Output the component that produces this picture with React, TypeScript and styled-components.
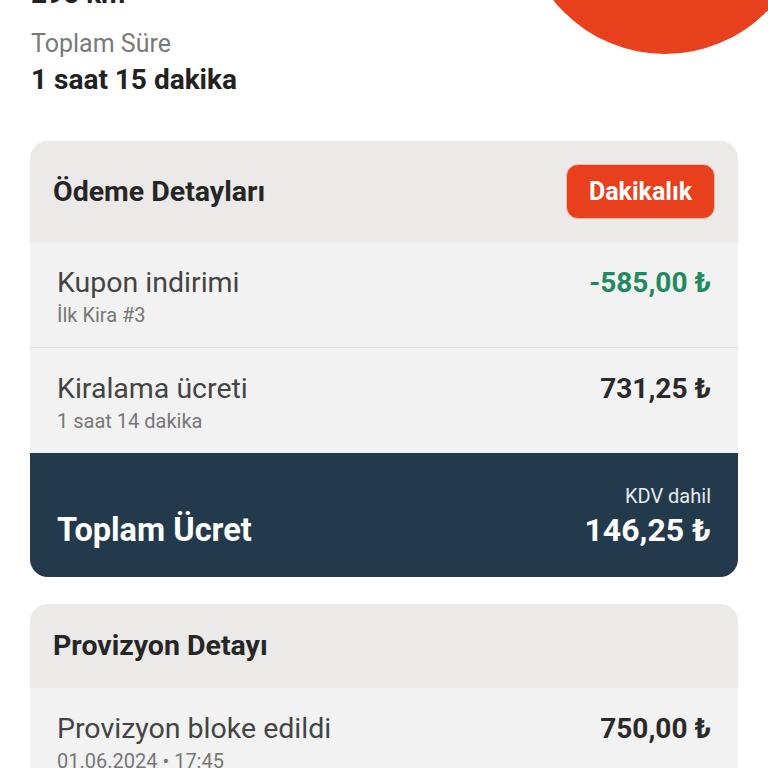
import styled, { createGlobalStyle } from "styled-components";

const GlobalStyle = createGlobalStyle`
  html, body {
    margin: 0;
    padding: 0;
    background: #ffffff;
    font-family: Roboto, "Noto Sans", "Liberation Sans", sans-serif;
    overflow: hidden;
  }
`;

const Page = styled.div`
  position: relative;
  height: 768px;
  overflow: hidden;
  background: #ffffff;
`;

const MarkerCircle = styled.div`
  position: absolute;
  left: 522px;
  top: -232px;
  width: 286px;
  height: 286px;
  border-radius: 50%;
  background: #e8401c;
`;

const Content = styled.div`
  display: flex;
  flex-direction: column;
  padding: 0 30px;
  margin-top: -56px;
`;

const Stats = styled.div`
  display: flex;
  flex-direction: column;
  gap: 20px;
  padding-left: 1px;
`;

const Stat = styled.div`
  display: flex;
  flex-direction: column;
  gap: 6px;
`;

const StatLabel = styled.span`
  font-size: 25px;
  line-height: 28px;
  color: #7a7a7a;
`;

const StatValue = styled.span`
  font-size: 28px;
  line-height: 32px;
  font-weight: 700;
  color: #222222;
`;

const Card = styled.section<{ $gap?: number }>`
  margin-top: ${({ $gap }) => $gap ?? 27}px;
  border-radius: 18px;
  overflow: hidden;
  background: #f2f2f2;
`;

const CardHeader = styled.div`
  display: flex;
  align-items: center;
  justify-content: space-between;
  padding: 23px 23px;
  background: #ebeae9;
`;

const CardTitle = styled.h2`
  margin: 0;
  font-size: 28.5px;
  line-height: 38px;
  font-weight: 700;
  color: #262626;
`;

const Badge = styled.span`
  display: inline-flex;
  align-items: center;
  justify-content: center;
  height: 55px;
  width: 149px;
  box-sizing: border-box;
  border-radius: 12px;
  background: #e8401c;
  border: 1px solid #f6b9a6;
  color: #ffffff;
  font-size: 25px;
  font-weight: 700;
`;

const Row = styled.div`
  display: flex;
  justify-content: space-between;
  align-items: flex-start;
  padding: 24px 27px 20px;
  & + & {
    border-top: 1px solid #e3e3e3;
  }
`;

const RowText = styled.div`
  display: flex;
  flex-direction: column;
  gap: 3px;
`;

const RowTitle = styled.span`
  font-size: 28.5px;
  line-height: 34px;
  color: #444444;
`;

const RowSub = styled.span`
  font-size: 20px;
  line-height: 24px;
  color: #777777;
`;

const Amount = styled.span<{ $tone?: "green" | "dark" }>`
  font-size: 28px;
  line-height: 34px;
  font-weight: 700;
  color: ${({ $tone }) => ($tone === "green" ? "#1f8a5f" : "#2a2a2a")};
`;

const Total = styled.div`
  display: flex;
  justify-content: space-between;
  align-items: flex-end;
  padding: 31px 27px 27px;
  background: #233a4c;
  color: #ffffff;
`;

const TotalTitle = styled.span`
  font-size: 32.5px;
  line-height: 40px;
  font-weight: 700;
`;

const TotalSide = styled.div`
  display: flex;
  flex-direction: column;
  align-items: flex-end;
  gap: 2px;
`;

const TotalNote = styled.span`
  font-size: 20px;
  line-height: 24px;
  color: #e6ebef;
`;

const TotalAmount = styled.span`
  font-size: 32px;
  line-height: 40px;
  font-weight: 700;
`;

type LineItem = {
  title: string;
  sub: string;
  amount: string;
  tone?: "green" | "dark";
};

const paymentItems: LineItem[] = [
  { title: "Kupon indirimi", sub: "İlk Kira #3", amount: "-585,00 ₺", tone: "green" },
  { title: "Kiralama ücreti", sub: "1 saat 14 dakika", amount: "731,25 ₺" },
];

const provisionItems: LineItem[] = [
  { title: "Provizyon bloke edildi", sub: "01.06.2024 • 17:45", amount: "750,00 ₺" },
];

const ItemRow = ({ title, sub, amount, tone }: LineItem) => (
  <Row>
    <RowText>
      <RowTitle>{title}</RowTitle>
      <RowSub>{sub}</RowSub>
    </RowText>
    <Amount $tone={tone}>{amount}</Amount>
  </Row>
);

export default function App() {
  return (
    <Page>
      <GlobalStyle />
      <MarkerCircle />
      <Content>
        <Stats>
          <Stat>
            <StatLabel>Toplam Mesafe</StatLabel>
            <StatValue>295 km</StatValue>
          </Stat>
          <Stat>
            <StatLabel>Toplam Süre</StatLabel>
            <StatValue>1 saat 15 dakika</StatValue>
          </Stat>
        </Stats>

        <Card $gap={45}>
          <CardHeader>
            <CardTitle>Ödeme Detayları</CardTitle>
            <Badge>Dakikalık</Badge>
          </CardHeader>
          {paymentItems.map((item) => (
            <ItemRow key={item.title} {...item} />
          ))}
          <Total>
            <TotalTitle>Toplam Ücret</TotalTitle>
            <TotalSide>
              <TotalNote>KDV dahil</TotalNote>
              <TotalAmount>146,25 ₺</TotalAmount>
            </TotalSide>
          </Total>
        </Card>

        <Card>
          <CardHeader>
            <CardTitle>Provizyon Detayı</CardTitle>
          </CardHeader>
          {provisionItems.map((item) => (
            <ItemRow key={item.title} {...item} />
          ))}
        </Card>
      </Content>
    </Page>
  );
}
